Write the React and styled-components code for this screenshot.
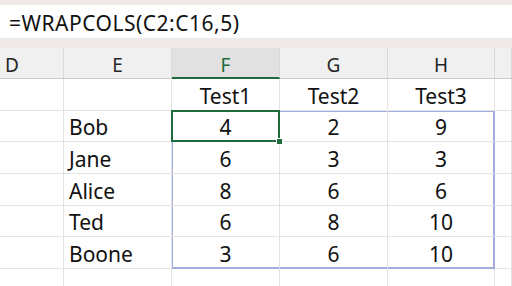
import React from 'react'
import styled, { createGlobalStyle } from 'styled-components';

const GlobalStyle = createGlobalStyle`
  html, body { margin: 0; padding: 0; background: #ffffff; overflow: hidden; }
  body { font-family: "Noto Sans", "Open Sans", sans-serif; }
`;

const columns = ['D', 'E', 'F', 'G', 'H', ''];
const rows = [
    { name: '', values: ['Test1', 'Test2', 'Test3'] },
    { name: 'Bob', values: ['4', '2', '9'] },
    { name: 'Jane', values: ['6', '3', '3'] },
    { name: 'Alice', values: ['8', '6', '6'] },
    { name: 'Ted', values: ['6', '8', '10'] },
    { name: 'Boone', values: ['3', '6', '10'] },
    { name: '', values: ['', '', ''] },
];

const App = () => {
    return (
        <Page>
            <GlobalStyle />
            <TopStrip />
            <FormulaBar>=WRAPCOLS(C2:C16,5)</FormulaBar>
            <GapStrip />
            <Sheet>
                {columns.map((c, i) => (
                    <ColHeader key={c + i} active={c === 'F'} left={c === 'D'}>{c}</ColHeader>
                ))}
                {rows.map((r, ri) => (
                    <React.Fragment key={ri}>
                        <Cell />
                        <Cell align="start">{r.name}</Cell>
                        {r.values.map((v, vi) => (
                            <Cell
                                key={vi}
                                spillTop={ri === 1}
                                spillBottom={ri === 5}
                                spillLeft={vi === 0 && ri >= 1 && ri <= 5}
                                spillRight={vi === 2 && ri >= 1 && ri <= 5}
                                selected={ri === 1 && vi === 0}
                            >
                                {v}
                                {ri === 1 && vi === 0 && <FillHandle />}
                            </Cell>
                        ))}
                        <Cell />
                    </React.Fragment>
                ))}
            </Sheet>
        </Page>
    )
}

export default App;

const Page = styled.div`
  width: 512px;
  height: 286px;
  overflow: hidden;
  background: #ffffff;
`;

const TopStrip = styled.div`
  height: 5px;
  background: #efeae8;
`;

const FormulaBar = styled.div`
  height: 33px;
  display: flex;
  align-items: center;
  padding: 3px 0 0 9px;
  box-sizing: border-box;
  font-size: 21px;
  letter-spacing: 0.5px;
  color: #111111;
  background: #ffffff;
`;

const GapStrip = styled.div`
  height: 10px;
  background: #efeae8;
`;

const Sheet = styled.div`
  display: grid;
  grid-template-columns: 64px 108px 108px 108px 107px 17px;
  grid-template-rows: 31px 32px 31px 32px 32px 31px 32px 40px;
`;

const ColHeader = styled.div`
  display: flex;
  align-items: center;
  justify-content: ${p => (p.left ? 'flex-start' : 'center')};
  padding: 4px 0 0 ${p => (p.left ? '5px' : '0')};
  box-sizing: border-box;
  font-size: 19px;
  color: ${p => (p.active ? '#1d6b3c' : '#262626')};
  background: ${p => (p.active ? '#e1e1e1' : '#f0f0f0')};
  border-right: 1px solid #d9d9d9;
  border-bottom: ${p => (p.active ? '2px solid #1d6b3c' : '1px solid #c9c9c9')};
`;

const Cell = styled.div`
  position: relative;
  display: flex;
  align-items: flex-end;
  justify-content: ${p => (p.align === 'start' ? 'flex-start' : 'center')};
  padding: 0 0 0 ${p => (p.align === 'start' ? '5px' : '0')};
  box-sizing: border-box;
  font-size: 21px;
  line-height: 27px;
  color: #111111;
  border-right: 1px solid #e3e3e3;
  border-bottom: 1px solid #e3e3e3;
  box-shadow: ${p => {
        const s = [];
        if (p.spillTop) s.push('inset 0 1px 0 #a3acdf');
        if (p.spillBottom) s.push('inset 0 -1px 0 #a3acdf');
        if (p.spillLeft) s.push('inset 1px 0 0 #a3acdf');
        if (p.spillRight) s.push('inset -1px 0 0 #a3acdf');
        return s.length ? s.join(', ') : 'none';
    }};
  ${p => p.spillBottom && 'border-bottom-color: #a3acdf;'}
  ${p => p.spillRight && 'border-right-color: #a3acdf;'}

  &::after {
    content: '';
    display: ${p => (p.selected ? 'block' : 'none')};
    position: absolute;
    left: -1px;
    top: -1px;
    right: -1px;
    bottom: -1px;
    border: 2px solid #1d6b3c;
    pointer-events: none;
  }
`;

const FillHandle = styled.span`
  position: absolute;
  right: -4px;
  bottom: -4px;
  width: 5px;
  height: 5px;
  background: #1d6b3c;
  border: 1px solid #ffffff;
  z-index: 2;
`;
